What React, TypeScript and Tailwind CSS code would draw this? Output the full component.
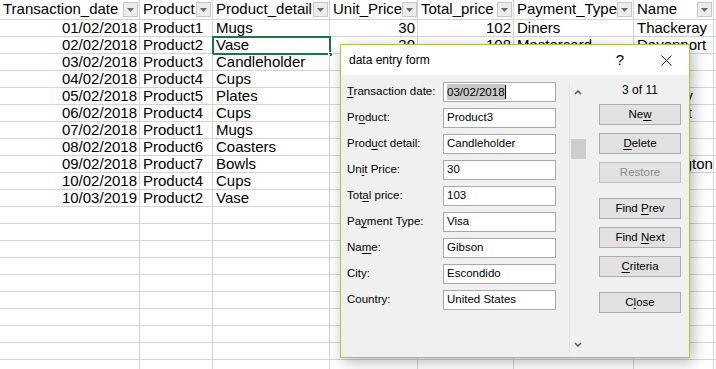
import React from "react";

const columns = [
  { title: "Transaction_date", width: 140, right: true },
  { title: "Product", width: 73, right: false },
  { title: "Product_detail", width: 117, right: false },
  { title: "Unit_Price", width: 88, right: true },
  { title: "Total_price", width: 96, right: true },
  { title: "Payment_Type", width: 120, right: false },
  { title: "Name", width: 80, right: false },
];

const rows = [
  ["01/02/2018", "Product1", "Mugs", "30", "102", "Diners", "Thackeray"],
  ["02/02/2018", "Product2", "Vase", "30", "108", "Mastercard", "Davenport"],
  ["03/02/2018", "Product3", "Candleholder", "30", "103", "Visa", "Gibson"],
  ["04/02/2018", "Product4", "Cups", "12", "40", "Amex", "Hughes"],
  ["05/02/2018", "Product5", "Plates", "25", "90", "Visa", "Hershey"],
  ["06/02/2018", "Product4", "Cups", "12", "44", "Diners", "Prescott"],
  ["07/02/2018", "Product1", "Mugs", "30", "98", "Visa", "Morris"],
  ["08/02/2018", "Product6", "Coasters", "8", "32", "Mastercard", "Parker"],
  ["09/02/2018", "Product7", "Bowls", "20", "75", "Amex", "Pennington"],
  ["10/02/2018", "Product4", "Cups", "12", "46", "Visa", "Lopez"],
  ["10/03/2019", "Product2", "Vase", "30", "105", "Diners", "Cole"],
];

const FilterButton = () => (
  <div className="w-[15px] h-[15px] shrink-0 mr-[1px] border border-[#c8c8c8] bg-[#ececec] flex items-center justify-center">
    <svg width="7" height="4" viewBox="0 0 7 4">
      <path d="M0 0 L7 0 L3.5 4 Z" fill="#6b6b6b" />
    </svg>
  </div>
);

const Ak = ({ children }: { children: React.ReactNode }) => (
  <span className="underline underline-offset-[2px] decoration-1">{children}</span>
);

const Field = ({
  label,
  value,
  selected,
}: {
  label: React.ReactNode;
  value: string;
  selected?: boolean;
}) => (
  <div className="flex items-center h-[20px]">
    <div className="w-[96px] whitespace-nowrap">{label}</div>
    <div className="w-[113px] h-[20px] border border-[#a8a8a8] bg-white pl-[3px] flex items-center">
      {selected ? (
        <>
          <span className="bg-[#c8c8c8] leading-[16px]">{value}</span>
          <span className="w-[1px] h-[14px] bg-black" />
        </>
      ) : (
        <span>{value}</span>
      )}
    </div>
  </div>
);

const Button = ({
  children,
  disabled,
  className,
}: {
  children: React.ReactNode;
  disabled?: boolean;
  className?: string;
}) => (
  <div
    className={
      "h-[21px] w-[82px] flex items-center justify-center bg-[#e1e1e1] border " +
      (disabled ? "border-[#bfbfbf] text-[#8a8a8a] " : "border-[#adadad] text-black ") +
      (className ?? "")
    }
  >
    <span className="whitespace-pre">{children}</span>
  </div>
);

const Chevron = ({ up }: { up?: boolean }) => (
  <svg width="8" height="5" viewBox="0 0 8 5">
    <path
      d={up ? "M1 4 L4 1 L7 4" : "M1 1 L4 4 L7 1"}
      fill="none"
      stroke="#5a5a5a"
      strokeWidth="1.6"
    />
  </svg>
);

const DataForm = () => (
  <div className="absolute left-[340px] top-[44px] w-[350px] h-[314px] border border-[#a9c83c] bg-[#f0f0f0] shadow-[3px_4px_14px_rgba(0,0,0,0.28)] font-['Liberation_Sans',Arial,sans-serif] text-[11.5px] text-black">
    <div className="h-[30px] bg-white flex items-center justify-between">
      <span className="pl-[8px] text-[12px]">data entry form</span>
      <div className="flex items-center">
        <div className="w-[46px] flex justify-center text-[15px]">?</div>
        <div className="w-[46px] flex justify-center">
          <svg width="11" height="11" viewBox="0 0 11 11">
            <path d="M0.5 0.5 L10.5 10.5 M10.5 0.5 L0.5 10.5" stroke="#222" strokeWidth="1" />
          </svg>
        </div>
      </div>
    </div>
    <div className="flex h-[282px]">
      <div className="pl-[6px] pt-[7px] flex flex-col gap-[6px]">
        <Field label={<><Ak>T</Ak>ransaction date:</>} value="03/02/2018" selected />
        <Field label={<>Pr<Ak>o</Ak>duct:</>} value="Product3" />
        <Field label={<>Prod<Ak>u</Ak>ct detail:</>} value="Candleholder" />
        <Field label={<>Un<Ak>i</Ak>t Price:</>} value="30" />
        <Field label={<>Tot<Ak>a</Ak>l price:</>} value="103" />
        <Field label={<>Pa<Ak>y</Ak>ment Type:</>} value="Visa" />
        <Field label={<>Na<Ak>m</Ak>e:</>} value="Gibson" />
        <Field label={<>City:</>} value="Escondido" />
        <Field label={<>Country:</>} value="United States" />
      </div>
      <div className="ml-[13px] mt-[7px] mb-[4px] w-[17px] border-l border-[#e2e2e2] flex flex-col">
        <div className="h-[20px] flex items-center justify-center">
          <Chevron up />
        </div>
        <div className="mt-[37px] h-[20px] w-[15px] ml-[1px] bg-[#cdcdcd]" />
        <div className="mt-auto h-[18px] flex items-center justify-center">
          <Chevron />
        </div>
      </div>
      <div className="ml-[13px] pt-[7px] w-[82px] flex flex-col">
        <div className="h-[15px] flex items-center justify-center text-[12px]">3 of 11</div>
        <Button className="mt-[7px]">
          Ne<Ak>w</Ak>
        </Button>
        <Button className="mt-[8px]">
          <Ak>D</Ak>elete
        </Button>
        <Button className="mt-[8px]" disabled>
          Restore
        </Button>
        <Button className="mt-[15px]">
          {"Find "}
          <Ak>P</Ak>rev
        </Button>
        <Button className="mt-[8px]">
          {"Find "}
          <Ak>N</Ak>ext
        </Button>
        <Button className="mt-[8px]">
          <Ak>C</Ak>riteria
        </Button>
        <Button className="mt-[15px]">
          C<Ak>l</Ak>ose
        </Button>
      </div>
    </div>
  </div>
);

const App = () => {
  const empty = Array.from({ length: 12 }, () => ["", "", "", "", "", "", ""]);
  return (
    <div className="relative w-[716px] h-[369px] overflow-hidden bg-white font-['Liberation_Sans',Arial,sans-serif] text-[15px] text-black">
      <div className="flex h-[20px] border-b border-[#d4d4d4] w-[800px]">
        {columns.map((c) => (
          <div
            key={c.title}
            style={{ width: c.width }}
            className="shrink-0 border-r border-[#d4d4d4] flex items-center justify-between pl-[3px] whitespace-nowrap overflow-hidden"
          >
            <span>{c.title}</span>
            <FilterButton />
          </div>
        ))}
        <div className="w-[60px] shrink-0 border-r border-[#d4d4d4]" />
      </div>
      {[...rows, ...empty].map((r, ri) => (
        <div key={ri} className="flex h-[17px] border-b border-[#d4d4d4] w-[800px]">
          {columns.map((c, ci) => (
            <div
              key={ci}
              style={{ width: c.width }}
              className={
                "relative shrink-0 border-r border-[#d4d4d4] flex items-center whitespace-nowrap leading-[16px] " +
                (c.right ? "justify-end pr-[2px]" : "pl-[3px]")
              }
            >
              {r[ci]}
              {ri === 1 && ci === 2 && (
                <div className="absolute -left-[1px] -top-[1px] w-[119px] h-[19px] border-2 border-[#217346]">
                  <div className="absolute -right-[4px] -bottom-[4px] w-[5px] h-[5px] bg-[#217346] border border-white" />
                </div>
              )}
            </div>
          ))}
          <div className="w-[60px] shrink-0 border-r border-[#d4d4d4]" />
        </div>
      ))}
      <DataForm />
    </div>
  );
};

export default App;
